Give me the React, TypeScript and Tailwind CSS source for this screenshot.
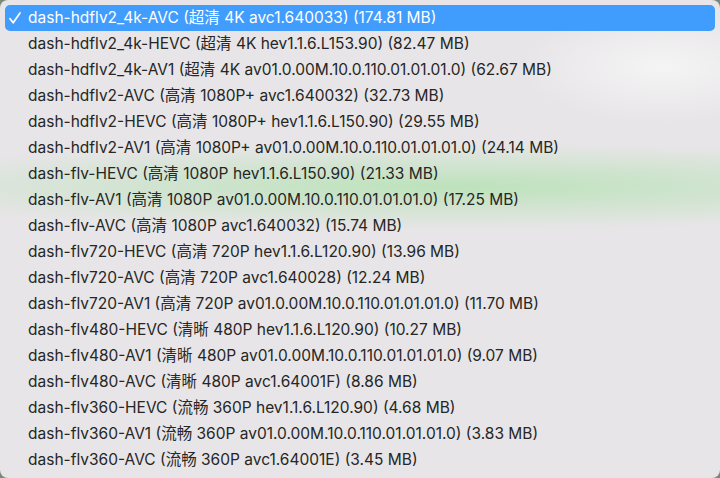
const items = [
  "dash-hdflv2_4k-AVC (超清 4K avc1.640033) (174.81 MB)",
  "dash-hdflv2_4k-HEVC (超清 4K hev1.1.6.L153.90) (82.47 MB)",
  "dash-hdflv2_4k-AV1 (超清 4K av01.0.00M.10.0.110.01.01.01.0) (62.67 MB)",
  "dash-hdflv2-AVC (高清 1080P+ avc1.640032) (32.73 MB)",
  "dash-hdflv2-HEVC (高清 1080P+ hev1.1.6.L150.90) (29.55 MB)",
  "dash-hdflv2-AV1 (高清 1080P+ av01.0.00M.10.0.110.01.01.01.0) (24.14 MB)",
  "dash-flv-HEVC (高清 1080P hev1.1.6.L150.90) (21.33 MB)",
  "dash-flv-AV1 (高清 1080P av01.0.00M.10.0.110.01.01.01.0) (17.25 MB)",
  "dash-flv-AVC (高清 1080P avc1.640032) (15.74 MB)",
  "dash-flv720-HEVC (高清 720P hev1.1.6.L120.90) (13.96 MB)",
  "dash-flv720-AVC (高清 720P avc1.640028) (12.24 MB)",
  "dash-flv720-AV1 (高清 720P av01.0.00M.10.0.110.01.01.01.0) (11.70 MB)",
  "dash-flv480-HEVC (清晰 480P hev1.1.6.L120.90) (10.27 MB)",
  "dash-flv480-AV1 (清晰 480P av01.0.00M.10.0.110.01.01.01.0) (9.07 MB)",
  "dash-flv480-AVC (清晰 480P avc1.64001F) (8.86 MB)",
  "dash-flv360-HEVC (流畅 360P hev1.1.6.L120.90) (4.68 MB)",
  "dash-flv360-AV1 (流畅 360P av01.0.00M.10.0.110.01.01.01.0) (3.83 MB)",
  "dash-flv360-AVC (流畅 360P avc1.64001E) (3.45 MB)",
];

function Check() {
  return (
    <svg width="14" height="14" viewBox="0 0 14 14" className="shrink-0">
      <path d="M2 7.8 L5.2 11.8 L12 2" fill="none" stroke="white" strokeWidth="1.8" strokeLinecap="round" strokeLinejoin="round" />
    </svg>
  );
}

export default function App() {
  return (
    <div className="w-[720px] h-[478px] overflow-hidden bg-[#7a8a7a]">
      <div
        className="relative w-[720px] h-[478px] rounded-[8px] bg-[#e7e5e7] px-[5px] pt-[5px] overflow-hidden"
        style={{ fontFamily: 'Inter, "Noto Sans CJK SC", sans-serif' }}
      >
        <div className="pointer-events-none absolute inset-0 bg-[radial-gradient(ellipse_85%_9%_at_62%_39%,rgba(178,226,176,0.8),rgba(178,226,176,0)_100%)]" />
        <div className="pointer-events-none absolute inset-0 bg-[radial-gradient(ellipse_20%_12%_at_92%_14%,rgba(255,255,255,0.6),rgba(255,255,255,0)_100%)]" />
        <ul className="relative flex flex-col">
          {items.map((t, i) => (
            <li
              key={t}
              className={
                i === 0
                  ? "flex h-[26px] items-center gap-[6px] rounded-[5px] bg-[#409cfd] pl-[3px] text-[15.5px] text-white"
                  : "flex h-[26px] items-center pl-[23px] text-[15.5px] text-[#262626]"
              }
            >
              {i === 0 && <Check />}
              <span className="whitespace-nowrap">{t}</span>
            </li>
          ))}
        </ul>
      </div>
    </div>
  );
}
